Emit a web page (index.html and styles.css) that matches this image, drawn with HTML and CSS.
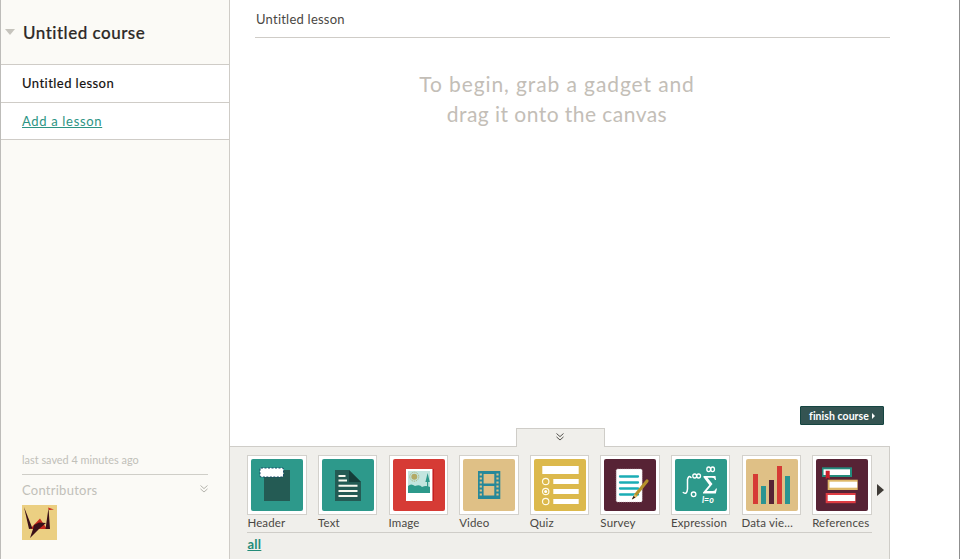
FILE: index.html
```html
<!DOCTYPE html>
<html lang="en">
<head>
<meta charset="utf-8">
<title>Untitled course</title>
<link rel="stylesheet" href="styles.css">
</head>
<body>
<div class="app">
  <aside class="sidebar">
    <header class="course"><span class="caret"></span><h1>Untitled course</h1></header>
    <ul class="lessons">
      <li><strong>Untitled lesson</strong></li>
      <li><a class="add" href="#">Add a lesson</a></li>
    </ul>
    <footer class="meta">
      <p class="saved">last saved 4 minutes ago</p>
      <div class="contributors"><span>Contributors</span>
        <svg width="8" height="8" viewBox="0 0 8 8" fill="none" stroke="#b5b4ad"><path d="M.5 .5 4 3.6 7.5 .5M.5 3.9 4 7 7.5 3.9"/></svg>
      </div>
      <svg class="avatar" width="35" height="35" viewBox="0 0 35 35"><rect width="35" height="35" fill="#ebcf82"/><path d="M8 24 18 13.500 25 24z" fill="#c92a1c"/><path d="M2 2 10.500 23.500 7 24zM26.500 3 28 24H23.500z" fill="#3a1018"/><path d="M26 2.500 32 4.500 27 5z" fill="#c92a1c"/><path d="M12 20 17 17.500 24 18 17 24 8 33 11 24z" fill="#3a1018"/></svg>
    </footer>
  </aside>
  <main class="main">
    <div class="lesson">
      <h2>Untitled lesson</h2>
      <p class="hint"><span class="wide">To begin, grab a gadget and</span><br>drag it onto the canvas</p>
    </div>
    <button class="finish"><span>finish course</span><i></i></button>
    <section class="tray">
      <div class="tab"><svg width="8" height="8" viewBox="0 0 8 8" fill="none" stroke="#55534e"><path d="M.5 .5 4 3.600 7.500 .5M.5 3.900 4 7 7.500 3.900"/></svg></div>
      <div class="gadgets">
        <figure><div class="tile"><svg viewBox="0 0 52 52"><rect width="52" height="52" rx="2" fill="#2d998b"/><path fill="#245b54" d="M13 11h26v31H13z"/><rect x="9.500" y="9.500" width="22.500" height="8" rx="1" fill="#fff" stroke="#fff"/><rect x="9" y="9" width="23.500" height="9" rx="1" fill="none" stroke="#174a68" stroke-dasharray="2 1.500"/></svg></div><figcaption>Header</figcaption></figure>
        <figure><div class="tile"><svg viewBox="0 0 52 52"><rect width="52" height="52" rx="2" fill="#2d998b"/><path fill="#245b54" d="M13 11h14l12 12v19H13z"/><path fill="#153e3a" d="M27 11 39 23H27z"/><path stroke="#f7f8ee" stroke-width="2" d="M16.500 17H23.500M16.500 21.500H25M16.500 26.800H35.500M16.500 32H35.500M16.500 37H35.500"/></svg></div><figcaption>Text</figcaption></figure>
        <figure><div class="tile"><svg viewBox="0 0 52 52"><rect width="52" height="52" rx="2" fill="#d63b35"/><path fill="#b80008" d="M39 10h1.500v32H39z"/><path fill="#fff" d="M13 10h26.500v32H13z"/><path fill="#c3e5df" d="M15 12h22v22H15z"/><circle cx="21.300" cy="17.700" r="4.500" fill="none" stroke="#aaa86b" stroke-dasharray="1 1"/><circle cx="21.300" cy="17.700" r="3" fill="#b3aa66"/><path fill="#2d998b" d="M15 34V27q3-3 7 0 5-2 7 1 4-2 8 0v6zM34.600 14 36.800 23H35.200V30H34V23H32.400z"/></svg></div><figcaption>Image</figcaption></figure>
        <figure><div class="tile"><svg viewBox="0 0 52 52"><rect width="52" height="52" rx="2" fill="#dfc086"/><path fill="#278899" d="M15 12h22.300v28H15z"/><path fill="#dfc086" d="M20.600 15h10.700v9.500H20.600zM20.600 27h10.700v9.500H20.600z"/><path stroke="#dfc086" stroke-width="2.200" stroke-dasharray="2 2" d="M17.800 14.500V38M34.500 14.500V38"/></svg></div><figcaption>Video</figcaption></figure>
        <figure><div class="tile"><svg viewBox="0 0 52 52"><rect width="52" height="52" rx="2" fill="#dcb94c"/><path fill="#fff" d="M8.300 7h36.400v8H8.300zM19.300 20h25.400v5H19.300zM19.300 30h25.400v5H19.300zM19.300 40h25.400v5H19.300z"/><g fill="none" stroke="#fffbe8" stroke-width="1.200"><circle cx="11.700" cy="22.500" r="3.200"/><circle cx="11.700" cy="32.500" r="3.200"/><circle cx="11.700" cy="42.500" r="3.200"/></g><circle cx="11.700" cy="32.500" r="1.500" fill="#fff"/></svg></div><figcaption>Quiz</figcaption></figure>
        <figure><div class="tile"><svg viewBox="0 0 52 52"><rect width="52" height="52" rx="2" fill="#572335"/><rect x="12.200" y="10" width="26" height="33" rx="1.500" fill="#fff" stroke="#cbb9c0" stroke-width=".6" stroke-dasharray="1 1"/><path stroke="#1badb5" stroke-width="2.300" stroke-linecap="round" d="M16 17.500H34M16 23.500H34M16 29.500H34M16 35.500H34"/><path stroke="#b5922c" stroke-width="3.200" stroke-linecap="round" d="M32 35.500 43 22"/><path fill="#e0bd67" d="m30.500 35 3 2.500-5.500 3z"/><path fill="#2b1a18" d="m29.500 37 2 1.600-3.700 2z"/></svg></div><figcaption>Survey</figcaption></figure>
        <figure><div class="tile"><svg viewBox="0 0 52 52"><rect width="52" height="52" rx="2" fill="#2d998b"/><path fill="none" stroke="#fff" stroke-width="1.500" stroke-linecap="round" d="M16 18.500Q13.500 16 12.500 20.500V30Q12 36 8.300 33.500"/><g fill="none" stroke="#fff" stroke-width="1.300"><ellipse cx="19.700" cy="17" rx="1.900" ry="2"/><ellipse cx="23.600" cy="17" rx="1.900" ry="2"/><ellipse cx="33.700" cy="10.300" rx="1.900" ry="2.300"/><ellipse cx="37.600" cy="10.300" rx="1.900" ry="2.300"/><circle cx="18.600" cy="35.300" r="2.300"/></g><path fill="#fff" d="M28.500 17H40.500L41 21H40Q39.500 18.800 37 18.800H32.500L37.500 25 31.700 32H38Q40 32 41 29.500H42L40.800 34.500H28V33.500L34.300 26 28.500 18.300z"/><text x="27" y="44.300">l=o</text></svg></div><figcaption>Expression</figcaption></figure>
        <figure><div class="tile"><svg viewBox="0 0 52 52"><rect width="52" height="52" rx="2" fill="#dfc086"/><path fill="#d63b35" d="M7 15h5v30H7zM31 7h5v38h-5z"/><path fill="#2b9491" d="M15 27h5v18h-5zM39 17h5v28h-5z"/><path fill="#572335" d="M23 21h5v24h-5z"/></svg></div><figcaption>Data vie…</figcaption></figure>
        <figure><div class="tile"><svg viewBox="0 0 52 52"><rect width="52" height="52" rx="2" fill="#572335"/><path fill="#238c7d" d="M6 8.300h30v9.700H6z"/><path fill="#fff" d="M7.500 10.300H34V16H7.500z"/><path fill="#c8202b" d="M9.700 11.700h4V20l-2-1.200-2 1.200z"/><path fill="#dfb969" d="M11.700 20.700h30v10.300h-30z"/><path fill="#fff" d="M13.500 22.700h27.700v6H13.500z"/><path fill="#df3c43" d="M9.700 34h30v10.200h-30z"/><path fill="#fff" d="M11.700 36h27.500v6H11.700z"/></svg></div><figcaption>References</figcaption></figure>
        <span class="next"></span>
      </div>
      <a class="all" href="#">all</a>
    </section>
  </main>
</div>
</body>
</html>
```

FILE: styles.css
```css
* { box-sizing: border-box; }
body { margin: 0; font-family: Lato, "Liberation Sans", sans-serif; color: #4a4743; }
h1, h2, p, ul, figure { margin: 0; padding: 0; font-weight: 400; }
svg { display: block; }
.app { display: flex; width: 960px; height: 559px; overflow: hidden; background: #fff; border-left: 1px solid #bdbcb9; border-right: 1px solid #8f8f8f; }
.sidebar { display: flex; flex-direction: column; width: 229px; background: #fbfaf6; border-right: 1px solid #cfccc7; }
.course { display: flex; align-items: center; height: 64px; padding-left: 4px; }
.caret { border: 5px solid transparent; border-top: 6px solid #c6c4bd; border-bottom: 0; }
h1 { margin-left: 8px; font-size: 17px; font-weight: 500; color: #2d2925; letter-spacing: .5px; -webkit-text-stroke: .2px; white-space: nowrap; }
.lessons { list-style: none; background: #fff; border-top: 1px solid #cfccc7; }
.lessons li { height: 37.500px; padding-left: 21px; line-height: 37px; font-size: 13px; border-bottom: 1px solid #cfccc7; }
.lessons strong { font-weight: 500; color: #171513; letter-spacing: .43px; -webkit-text-stroke: .1px; }
.add { color: #2c9484; letter-spacing: .67px; text-underline-offset: 1px; }
.meta { margin: auto 21px 19px; color: #c1c0b9; }
.saved { height: 22px; padding-top: 1px; font-size: 10.900px; line-height: 14px; letter-spacing: 0; }
.contributors { display: flex; justify-content: space-between; padding-top: 6px; height: 31px; border-top: 1px solid #cfcec8; font-size: 13px; line-height: 18px; letter-spacing: .25px; }
.contributors svg { margin-top: 4px; }
.main { display: flex; flex-direction: column; flex: 1; min-width: 0; }
.lesson { width: 635px; margin-left: 25px; }
h2 { height: 38px; padding: 10px 1px; border-bottom: 1px solid #cfccc7; font-size: 13px; line-height: 18px; letter-spacing: .23px; }
.hint { width: 604px; padding-top: 31px; text-align: center; font-size: 21px; line-height: 30px; color: #c3beb7; letter-spacing: .45px; }
.wide { letter-spacing: .9px; }
.finish { display: flex; align-items: center; justify-content: center; gap: 3px; width: 84px; height: 19px; margin: auto 0 21px 570px; padding: 0; background: #345452; border: 1px solid #154541; border-radius: 1px; color: #fff; font: 700 10.500px Lato, sans-serif; letter-spacing: .05px; }
.finish i { border: 3px solid transparent; border-left: 3px solid #fff; border-right: 0; }
.tray { position: relative; width: 660px; height: 113px; padding: 8px 0 0 17.400px; background: #f0efeb; border: solid #cfcdc8; border-width: 1px 1px 0 0; }
.tab { position: absolute; left: 285.500px; top: -19px; width: 89px; height: 19px; display: flex; justify-content: center; padding-top: 4px; background: #f0efeb; border: 1px solid #cfcdc8; border-bottom: 0; }
.gadgets { display: flex; width: 642px; height: 77px; }
.gadgets figure { flex: 0 0 70.600px; }
.tile { width: 59.500px; height: 59.500px; padding: 3px; background: #fff; border: 1px solid #d3d1cc; }
.tile svg { width: 52px; height: 52px; }
.tile text { font: italic 700 8.800px Lato, sans-serif; fill: #fff; }
figcaption { width: 70px; font-size: 11.500px; line-height: 16px; letter-spacing: .15px; white-space: nowrap; }
.next { margin-top: 29px; margin-left: -6px; height: 12px; border: 6px solid transparent; border-left: 7px solid #3f3b36; border-right: 0; }
.all { display: block; width: 625px; border-top: 1px solid #cfcdc8; padding-top: 3px; color: #238b78; font-size: 13px; font-weight: 700; line-height: 17px; letter-spacing: .3px; }
```
